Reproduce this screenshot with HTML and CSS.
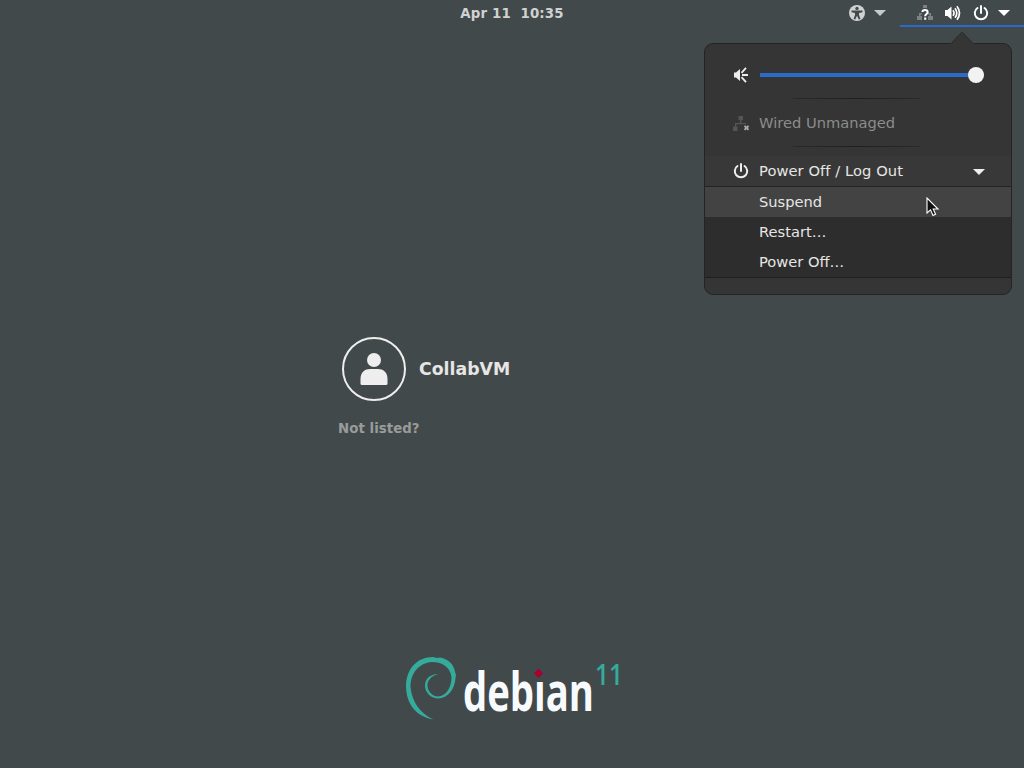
FILE: index.html
```html
<!DOCTYPE html>
<html lang="en">
<head>
<meta charset="UTF-8">
<meta name="viewport" content="width=device-width, initial-scale=1.0">
<title>Login</title>
<link rel="stylesheet" href="styles.css">
</head>
<body>

<div class="topbar">
    <div class="clock">Apr 11&nbsp; 10:35</div>
    <div class="indicators">
        <div class="indicator a11y">
            <svg width="16" height="16" viewBox="0 0 16 16">
                <circle cx="8" cy="8" r="8" fill="#d0d2d2"/>
                <circle cx="8" cy="3.4" r="1.7" fill="#42494b"/>
                <path d="M2.500 5.400h11v1.800L10 7.900v2l1.500 4-1.700.6L8 10.800l-1.800 3.700-1.700-.6 1.500-4v-2L2.500 7.200z" fill="#42494b"/>
            </svg>
            <svg class="arrow" width="12" height="6" viewBox="0 0 12 6"><path d="M0 0h12L6 6z" fill="#c8caca"/></svg>
        </div>
        <div class="indicator system">
            <svg width="16" height="16" viewBox="0 0 16 16">
                <path d="M6 0h4v3H6zM0 11h5v4H0zM11 11h5v4h-5zM2 8h3v1.500H2zM11 8h3v3h-1.500V9.500H11zM2 8h1.500v3H2z" fill="#7d8384"/>
                <path d="M5.500 7C5.500 4.300 10.600 4.300 10.600 7.200 10.600 9 8.200 9 8.200 11.200M8.200 12.500v2.200" fill="none" stroke="#fff" stroke-width="2.100"/>
            </svg>
            <svg width="16" height="16" viewBox="0 0 16 16">
                <path d="M0 5h2.500L6.500 1.500v13L2.500 11H0z" fill="#fff"/>
                <path d="M8 5.200q2 2.800 0 5.600M10 3.200q3.600 4.800 0 9.600M12 1.200q5 6.800 0 13.600" fill="none" stroke="#fff" stroke-width="1.700"/>
            </svg>
            <svg width="16" height="16" viewBox="0 0 16 16">
                <path d="M4.500 3a6.200 6.200 0 1 0 7 0M8 1v7" fill="none" stroke="#fff" stroke-width="2" stroke-linecap="round"/>
            </svg>
            <svg class="arrow" width="12" height="6" viewBox="0 0 12 6"><path d="M0 0h12L6 6z" fill="#fff"/></svg>
        </div>
    </div>
</div>

<div class="menu">
    <svg class="menu-tip" width="24" height="13" viewBox="0 0 24 13"><path d="M0 13L1 12 12 .5 23 12l1 1z" fill="#353535"/><path d="M0 12.500h1L12 1l11 11.500h1" fill="none" stroke="#2b2f30"/></svg>
    <div class="volume">
        <svg width="16" height="16" viewBox="0 0 16 16">
            <path d="M1 5.500h2L7 2v12l-4-3.500H1z" fill="#eee"/>
            <path d="M8.500 5.800L13 .8M9 8h6M8.500 10.200l4.500 5" fill="none" stroke="#eee" stroke-width="1.800"/>
        </svg>
        <div class="slider"><div class="knob"></div></div>
    </div>
    <div class="separator"></div>
    <div class="item network">
        <svg width="16" height="16" viewBox="0 0 16 16">
            <path d="M5.500 1h4.500v4H5.500zM0 11.500h4.500v4.500H0zM7 5h1.500v3H7zM2 8h11v1.300H3.300v2.200H2z" fill="#555"/>
            <path d="M11.500 10.800l4 4M15.500 10.800l-4 4" stroke="#aaa" stroke-width="1.900"/>
        </svg>
        <span>Wired Unmanaged</span>
    </div>
    <div class="separator"></div>
    <div class="item power">
        <svg width="16" height="16" viewBox="0 0 16 16">
            <path d="M4.500 3a6.200 6.200 0 1 0 7 0M8 1v7" fill="none" stroke="#eee" stroke-width="2" stroke-linecap="round"/>
        </svg>
        <span class="label">Power Off / Log Out</span>
        <svg class="expander" width="12" height="8" viewBox="0 0 12 8"><path d="M0 2h12L6 8z" fill="#eee"/></svg>
    </div>
    <div class="submenu">
        <div class="subitem active">Suspend</div>
        <div class="subitem">Restart…</div>
        <div class="subitem">Power Off…</div>
    </div>
</div>

<div class="login">
    <div class="user">
        <div class="avatar">
            <svg width="28" height="32" viewBox="0 0 28 32">
                <circle cx="14" cy="7" r="7" fill="#eee"/>
                <path d="M.5 30.500V26C.5 19 5 16 10 16h8c5 0 9.500 3 9.500 10v4.500q0 1.500-1.500 1.500H2Q.5 32 .5 30.500z" fill="#eee"/>
            </svg>
        </div>
        <div class="username">CollabVM</div>
    </div>
    <div class="not-listed">Not listed?</div>
</div>

<div class="footer">
    <svg width="240" height="100" viewBox="0 0 240 100">
        <path d="M38 74.500C20 71 11.500 58 11 42 11 24 22 12 38 12l4 1 3-.5C54 14 59 20 60 27l1 3-.5 3C60 44 53 53 43 53.500 35 53 30 47 30 40.500 30 34 35 29 43 29 36 31 32 36 32.500 41 33 47 38 51.500 43 51.500 51 51 56.500 43 56.500 32 55 21 46 17 37 17 24 18 15.500 28 15.500 42 17 57 25 68 38 74.500z" fill="#35ab9c"/>
        <text class="wordmark" x="68" y="66" textLength="131" lengthAdjust="spacingAndGlyphs">debian</text>
        <path d="M137 22h13v12h-13z" fill="#42494b"/>
        <path d="M143.500 23.500l4.500 5-4.500 4.500-4.500-4.500z" fill="#a80030"/>
        <text class="release" x="200" y="40" textLength="28" lengthAdjust="spacingAndGlyphs">11</text>
    </svg>
</div>

<svg class="cursor" width="14" height="20" viewBox="0 0 14 20">
    <path d="M1 1v15l3.500-3.200 2.500 5.700 2.600-1.200L7.200 12H12z" fill="#111" stroke="#fff" stroke-width="1.100"/>
</svg>

</body>
</html>
```
FILE: styles.css
```css
body {
    margin: 0;
    height: 768px;
    overflow: hidden;
    display: flex;
    flex-direction: column;
    background-color: #42494b;
    color: #e6e6e4;
    font-family: "DejaVu Sans", sans-serif;
    font-size: 14.667px;
}

svg {
    display: block;
    flex: none;
}

.topbar {
    display: grid;
    grid-template-columns: 1fr auto 1fr;
    height: 27px;
    flex: none;
}

.clock {
    grid-column: 2;
    line-height: 28px;
    font-size: 13.333px;
    font-weight: bold;
    letter-spacing: 0.15px;
    color: #d0d2d2;
}

.indicators {
    display: flex;
    justify-content: flex-end;
}

.indicator {
    display: flex;
    align-items: center;
    box-sizing: border-box;
    height: 27px;
    border-bottom: 2px solid transparent;
}

.a11y {
    gap: 9px;
    padding-right: 14px;
}

.system {
    width: 124px;
    gap: 12px;
    padding-left: 17px;
    border-bottom-color: #2b6bc8;
}

.system .arrow {
    margin-left: -3px;
}

.menu {
    position: absolute;
    left: 704px;
    top: 43px;
    width: 308px;
    height: 252px;
    box-sizing: border-box;
    border: 1px solid #222525;
    border-radius: 9px;
    background-color: #353535;
}

.menu-tip {
    position: absolute;
    left: 245px;
    top: -13px;
}

.volume {
    display: flex;
    align-items: center;
    gap: 11px;
    box-sizing: border-box;
    height: 54px;
    padding: 8px 27px 0 28px;
}

.slider {
    flex: 1;
    display: flex;
    align-items: center;
    justify-content: flex-end;
    height: 4px;
    background-color: #2b6bc8;
}

.knob {
    width: 16px;
    height: 16px;
    border-radius: 50%;
    background-color: #f2f2f2;
}

.separator {
    width: 128px;
    height: 1px;
    margin-left: 88px;
    background: linear-gradient(to right, #2a2a2a, #1f1f1f, #2a2a2a);
}

.item {
    display: flex;
    align-items: center;
    gap: 10px;
    height: 47px;
    padding: 0 26px 0 28px;
}

.network {
    color: #8c8c8c;
}

.power {
    height: 30px;
    margin-top: 9px;
    background-color: #383838;
}

.label {
    padding-bottom: 2px;
    letter-spacing: 0.08px;
}

.expander {
    margin-left: auto;
}

.submenu {
    border-top: 1px solid #232323;
    border-bottom: 1px solid #1f1f1f;
    background-color: #2d2d2d;
}

.subitem {
    height: 30px;
    line-height: 30px;
    padding-left: 54px;
}

.active {
    background-color: #434343;
}

.login {
    margin: 310px 0 0 338px;
}

.user {
    display: flex;
    align-items: center;
    gap: 13px;
    padding-left: 4px;
}

.avatar {
    display: flex;
    align-items: center;
    justify-content: center;
    width: 60px;
    height: 60px;
    border: 2px solid #eeeeec;
    border-radius: 50%;
}

.username {
    font-size: 17.333px;
    font-weight: bold;
}

.not-listed {
    margin-top: 19px;
    line-height: 18px;
    font-size: 13.333px;
    font-weight: bold;
    letter-spacing: 0.05px;
    color: #999c9a;
}

.footer {
    margin: auto 0 23px 395px;
}

.wordmark {
    font-family: "Open Sans", sans-serif;
    font-size: 54px;
    font-weight: bold;
    fill: #f8fbfd;
}

.release {
    font-family: "Open Sans", sans-serif;
    font-size: 28px;
    font-weight: 600;
    fill: #35ab9c;
}

.cursor {
    position: absolute;
    left: 926px;
    top: 197px;
}
```
